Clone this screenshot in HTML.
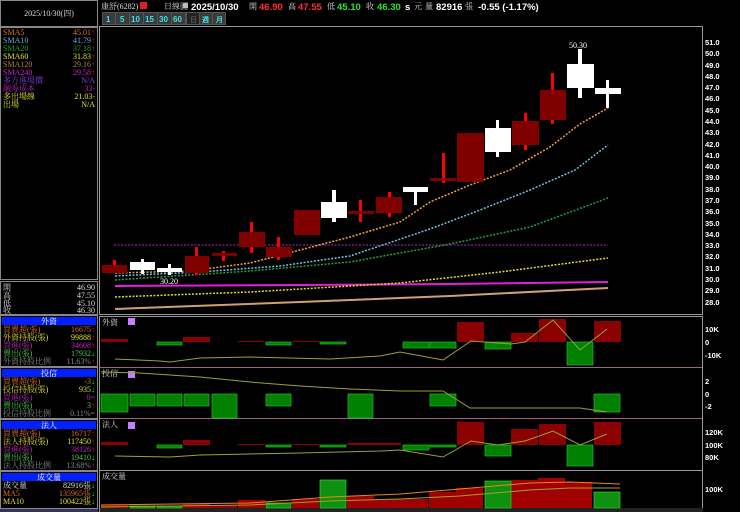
<!DOCTYPE html>
<html><head><meta charset="utf-8"><style>
html,body{margin:0;padding:0;background:#000;width:740px;height:512px;overflow:hidden}
svg{display:block;font-family:"Liberation Sans","Noto Sans CJK TC",sans-serif}
.s{font-family:"Liberation Serif","Noto Serif CJK SC",serif;font-size:8px}
.a{font-family:"Liberation Sans",sans-serif;font-size:8px;fill:#fff;font-weight:bold}
.t{font-family:"Liberation Sans",sans-serif;font-size:9.5px;font-weight:bold}
</style></head><body>
<svg width="740" height="512" viewBox="0 0 740 512">
<rect x="0.5" y="0.5" width="97" height="26" fill="none" stroke="#888"/>
<text x="49" y="16" class="s" fill="#ddd" text-anchor="middle">2025/10/30(四)</text>
<rect x="0.5" y="27.5" width="97" height="252" fill="none" stroke="#888"/>
<g class="s">
<text x="3" y="35" fill="#e07020">SMA5</text><text x="95" y="35" fill="#e07020" text-anchor="end">45.01<tspan fill="#f00">↑</tspan></text>
<text x="3" y="43" fill="#60b0e0">SMA10</text><text x="95" y="43" fill="#60b0e0" text-anchor="end">41.79<tspan fill="#f00">↑</tspan></text>
<text x="3" y="51" fill="#20a020">SMA20</text><text x="95" y="51" fill="#20a020" text-anchor="end">37.18<tspan fill="#f00">↑</tspan></text>
<text x="3" y="59" fill="#e0e020">SMA60</text><text x="95" y="59" fill="#e0e020" text-anchor="end">31.83<tspan fill="#f00">↑</tspan></text>
<text x="3" y="67" fill="#b08040">SMA120</text><text x="95" y="67" fill="#b08040" text-anchor="end">29.16<tspan fill="#f00">↑</tspan></text>
<text x="3" y="75" fill="#d020d0">SMA240</text><text x="95" y="75" fill="#d020d0" text-anchor="end">29.58<tspan fill="#f00">↑</tspan></text>
<text x="3" y="83" fill="#8040e0">多方進場價</text><text x="95" y="83" fill="#8040e0" text-anchor="end">N/A</text>
<text x="3" y="91" fill="#c020c0">融券成本</text><text x="95" y="91" fill="#c020c0" text-anchor="end">33-</text>
<text x="3" y="99" fill="#e0e020">多出場線</text><text x="95" y="99" fill="#e0e020" text-anchor="end">21.03-</text>
<text x="3" y="107" fill="#e0e020">出場</text><text x="95" y="107" fill="#e0e020" text-anchor="end">N/A</text>
</g>
<rect x="0.5" y="281.5" width="97" height="33" fill="none" stroke="#888"/>
<g class="s" fill="#ddd">
<text x="3" y="290">開</text><text x="95" y="290" text-anchor="end">46.90</text>
<text x="3" y="298">高</text><text x="95" y="298" text-anchor="end">47.55</text>
<text x="3" y="306">低</text><text x="95" y="306" text-anchor="end">45.10</text>
<text x="3" y="313">收</text><text x="95" y="313" text-anchor="end">46.30</text>
</g>
<rect x="0.5" y="315.5" width="97" height="51" fill="none" stroke="#888"/>
<rect x="2" y="317" width="94" height="8" fill="#0020ff"/>
<text x="49" y="324" class="s" fill="#fff" text-anchor="middle">外資</text>
<g class="s">
<text x="3" y="332" fill="#e07020">買賣超(張)</text><text x="95" y="332" text-anchor="end" fill="#e07020">16675<tspan fill="#f00">↑</tspan></text>
<text x="3" y="340" fill="#e0e020">外資持股(張)</text><text x="95" y="340" text-anchor="end" fill="#e0e020">99888<tspan fill="#f00">↑</tspan></text>
<text x="3" y="348" fill="#c020c0">買進(張)</text><text x="95" y="348" text-anchor="end" fill="#c020c0">34608<tspan fill="#f00">↑</tspan></text>
<text x="3" y="356" fill="#40d040">賣出(張)</text><text x="95" y="356" text-anchor="end" fill="#40d040">17932<tspan fill="#0f0">↓</tspan></text>
<text x="3" y="364" fill="#888">外資持股比例</text><text x="95" y="364" text-anchor="end" fill="#888">11.63%<tspan fill="#f00">↑</tspan></text>
</g>
<rect x="0.5" y="367.5" width="97" height="51" fill="none" stroke="#888"/>
<rect x="2" y="369" width="94" height="8" fill="#0020ff"/>
<text x="49" y="376" class="s" fill="#fff" text-anchor="middle">投信</text>
<g class="s">
<text x="3" y="384" fill="#e07020">買賣超(張)</text><text x="95" y="384" text-anchor="end" fill="#e07020">-3<tspan fill="#0f0">↓</tspan></text>
<text x="3" y="392" fill="#e0e020">投信持股(張)</text><text x="95" y="392" text-anchor="end" fill="#e0e020">935<tspan fill="#0f0">↓</tspan></text>
<text x="3" y="400" fill="#c020c0">買進(張)</text><text x="95" y="400" text-anchor="end" fill="#c020c0">0=</text>
<text x="3" y="408" fill="#40d040">賣出(張)</text><text x="95" y="408" text-anchor="end" fill="#40d040">3<tspan fill="#f00">↑</tspan></text>
<text x="3" y="416" fill="#888">投信持股比例</text><text x="95" y="416" text-anchor="end" fill="#888">0.11%=</text>
</g>
<rect x="0.5" y="419.5" width="97" height="51" fill="none" stroke="#888"/>
<rect x="2" y="421" width="94" height="8" fill="#0020ff"/>
<text x="49" y="428" class="s" fill="#fff" text-anchor="middle">法人</text>
<g class="s">
<text x="3" y="436" fill="#e07020">買賣超(張)</text><text x="95" y="436" text-anchor="end" fill="#e07020">16717<tspan fill="#f00">↑</tspan></text>
<text x="3" y="444" fill="#e0e020">法人持股(張)</text><text x="95" y="444" text-anchor="end" fill="#e0e020">117450<tspan fill="#f00">↑</tspan></text>
<text x="3" y="452" fill="#c020c0">買進(張)</text><text x="95" y="452" text-anchor="end" fill="#c020c0">38126<tspan fill="#f00">↑</tspan></text>
<text x="3" y="460" fill="#40d040">賣出(張)</text><text x="95" y="460" text-anchor="end" fill="#40d040">19410<tspan fill="#0f0">↓</tspan></text>
<text x="3" y="468" fill="#888">法人持股比例</text><text x="95" y="468" text-anchor="end" fill="#888">13.68%<tspan fill="#f00">↑</tspan></text>
</g>
<rect x="0.5" y="471.5" width="97" height="37" fill="none" stroke="#888"/>
<rect x="2" y="473" width="94" height="8" fill="#0020ff"/>
<text x="49" y="480" class="s" fill="#fff" text-anchor="middle">成交量</text>
<g class="s">
<text x="3" y="488" fill="#ddd">成交量</text><text x="95" y="488" text-anchor="end" fill="#ddd">82916張<tspan fill="#0f0">↓</tspan></text>
<text x="3" y="496" fill="#e07020">MA5</text><text x="95" y="496" text-anchor="end" fill="#e07020">135965張<tspan fill="#0f0">↓</tspan></text>
<text x="3" y="504" fill="#e0e020">MA10</text><text x="95" y="504" text-anchor="end" fill="#e0e020">100422張<tspan fill="#0f0">↓</tspan></text>
</g>
<rect x="0" y="509" width="98" height="3" fill="#335"/>

<text x="101" y="9" class="s" fill="#ddd">康舒(6282)</text>
<rect x="140" y="2" width="7" height="7" fill="#e02020"/>
<text x="164" y="9" class="s" fill="#ddd">日線圖</text>
<rect x="183" y="3" width="5" height="5" fill="#bbb"/>
<text x="191" y="10" class="t" fill="#fff" font-size="10.5">2025/10/30</text>
<text x="249" y="9" class="s" fill="#ddd">開</text><text x="259" y="10" class="t" fill="#ff3030">46.90</text>
<text x="288" y="9" class="s" fill="#ddd">高</text><text x="298" y="10" class="t" fill="#ff3030">47.55</text>
<text x="327" y="9" class="s" fill="#ddd">低</text><text x="337" y="10" class="t" fill="#30e030">45.10</text>
<text x="366" y="9" class="s" fill="#ddd">收</text><text x="377" y="10" class="t" fill="#30e030">46.30</text>
<text x="405" y="10" class="t" fill="#fff">s</text><text x="414" y="9" class="s" fill="#ddd">元</text>
<text x="425" y="9" class="s" fill="#ddd">量</text><text x="436" y="10" class="t" fill="#fff">82916</text><text x="465" y="9" class="s" fill="#ddd">張</text>
<text x="478" y="10" class="t" fill="#fff">-0.55 (-1.17%)</text>
<rect x="102" y="12" width="124" height="13" fill="#555"/>
<g font-size="8" font-weight="bold" fill="#40e0e0" font-family="Liberation Sans,sans-serif">
<rect x="103" y="13" width="12" height="11" fill="#3a3a3a"/><text x="106" y="22">1</text>
<rect x="116" y="13" width="13" height="11" fill="#3a3a3a"/><text x="120" y="22">5</text>
<rect x="130" y="13" width="13" height="11" fill="#3a3a3a"/><text x="131" y="22">10</text>
<rect x="144" y="13" width="13" height="11" fill="#3a3a3a"/><text x="145" y="22">15</text>
<rect x="158" y="13" width="13" height="11" fill="#3a3a3a"/><text x="159" y="22">30</text>
<rect x="172" y="13" width="13" height="11" fill="#3a3a3a"/><text x="173" y="22">60</text>
<rect x="187" y="13" width="12" height="11" fill="#222"/><text x="190" y="22" fill="#555" font-size="7">日</text>
<rect x="200" y="13" width="12" height="11" fill="#3a3a3a"/><text x="202" y="22" font-size="7">週</text>
<rect x="213" y="13" width="12" height="11" fill="#3a3a3a"/><text x="216" y="22" font-size="7">月</text>
</g>

<rect x="99.5" y="26.5" width="603" height="288" fill="none" stroke="#999"/>
<line x1="100" y1="316.5" x2="703" y2="316.5" stroke="#999"/>
<line x1="100" y1="367.5" x2="703" y2="367.5" stroke="#a06080"/>
<line x1="100" y1="418.5" x2="703" y2="418.5" stroke="#a06080"/>
<line x1="100" y1="470.5" x2="703" y2="470.5" stroke="#999"/>
<line x1="99.5" y1="316" x2="99.5" y2="512" stroke="#999"/>
<line x1="702.5" y1="316" x2="702.5" y2="512" stroke="#999"/>
<rect x="100" y="508" width="603" height="4" fill="#222"/>

<g class="a" style="font-size:7.5px">
<text x="705" y="45">51.0</text><text x="705" y="56">50.0</text><text x="705" y="68">49.0</text><text x="705" y="79">48.0</text>
<text x="705" y="90">47.0</text><text x="705" y="101">46.0</text><text x="705" y="113">45.0</text><text x="705" y="124">44.0</text>
<text x="705" y="135">43.0</text><text x="705" y="147">42.0</text><text x="705" y="158">41.0</text><text x="705" y="169">40.0</text>
<text x="705" y="180">39.0</text><text x="705" y="192">38.0</text><text x="705" y="203">37.0</text><text x="705" y="214">36.0</text>
<text x="705" y="226">35.0</text><text x="705" y="237">34.0</text><text x="705" y="248">33.0</text><text x="705" y="259">32.0</text>
<text x="705" y="271">31.0</text><text x="705" y="282">30.0</text><text x="705" y="293">29.0</text><text x="705" y="305">28.0</text>
<text x="705" y="332">10K</text><text x="705" y="345">0</text><text x="705" y="358">-10K</text>
<text x="705" y="384">2</text><text x="705" y="397">0</text><text x="705" y="409">-2</text>
<text x="705" y="435">120K</text><text x="705" y="448">100K</text><text x="705" y="460">80K</text>
<text x="705" y="492">100K</text>
</g>

<line x1="114" y1="245" x2="608" y2="245" stroke="#9020a0" stroke-dasharray="2,1.5" stroke-width="1.3"/>
<polyline points="115,309 300,302 450,296 608,288" fill="none" stroke="#d0a070" stroke-width="2"/>
<polyline points="115,286 300,285 450,284 608,282" fill="none" stroke="#e020e0" stroke-width="2"/>
<polyline points="115,297 250,292 400,283 500,272 608,258" fill="none" stroke="#e0e020" stroke-dasharray="2,1.5" stroke-width="1.5"/>
<polyline points="115,280 250,271 350,262 450,244 530,227 608,198" fill="none" stroke="#20a040" stroke-dasharray="2,1.5" stroke-width="1.5"/>
<polyline points="115,276 200,272 280,266 350,256 430,229 480,210 530,190 575,170 608,145" fill="none" stroke="#70c0e0" stroke-dasharray="2,1.5" stroke-width="1.5"/>
<polyline points="115,273 190,271 250,263 300,250 350,237 400,222 430,202 470,185 510,170 550,147 580,124 608,108" fill="none" stroke="#f0a040" stroke-dasharray="2,1.5" stroke-width="1.5"/>

<g fill="#800000" stroke="none">
<rect x="113" y="260" width="3" height="5" fill="#f00"/><rect x="102" y="265" width="25" height="8"/>
<rect x="195" y="247" width="3" height="28" fill="#f00"/><rect x="185" y="256" width="24" height="17"/>
<rect x="222" y="251" width="3" height="10" fill="#f00"/><rect x="212" y="253" width="25" height="3"/>
<rect x="250" y="222" width="3" height="31" fill="#f00"/><rect x="239" y="232" width="26" height="15"/>
<rect x="277" y="237" width="3" height="23" fill="#f00"/><rect x="266" y="247" width="26" height="10"/>
<rect x="294" y="210" width="26" height="25"/>
<rect x="359" y="200" width="3" height="22" fill="#f00"/><rect x="348" y="211" width="26" height="3"/>
<rect x="388" y="192" width="3" height="25" fill="#f00"/><rect x="376" y="197" width="26" height="16"/>
<rect x="442" y="153" width="3" height="30" fill="#f00"/><rect x="430" y="178" width="26" height="3"/>
<rect x="457" y="133" width="27" height="49"/>
<rect x="524" y="113" width="3" height="37" fill="#f00"/><rect x="512" y="121" width="27" height="24"/>
<rect x="551" y="73" width="3" height="51" fill="#f00"/><rect x="540" y="90" width="26" height="30"/>
</g>
<g fill="#fff">
<rect x="141" y="259" width="3" height="15"/><rect x="130" y="262" width="25" height="8"/>
<rect x="168" y="264" width="3" height="11"/><rect x="157" y="268" width="25" height="4"/>
<rect x="332" y="190" width="4" height="32"/><rect x="321" y="202" width="26" height="16"/>
<rect x="414" y="187" width="3" height="18"/><rect x="403" y="187" width="25" height="5"/>
<rect x="496" y="120" width="3" height="37"/><rect x="485" y="128" width="26" height="24"/>
<rect x="578" y="49" width="4" height="49"/><rect x="567" y="64" width="27" height="24"/>
<rect x="606" y="80" width="3" height="28"/><rect x="595" y="88" width="26" height="6"/>
</g>
<text x="569" y="48" class="s" fill="#fff">50.30</text>
<text x="160" y="284" class="s" fill="#fff">30.20</text>

<g class="s" fill="#ddd"><text x="102" y="325">外資</text><text x="102" y="376">投信</text><text x="102" y="427">法人</text><text x="102" y="479">成交量</text></g>
<g fill="#c080ff"><rect x="128" y="318" width="7" height="7"/><rect x="128" y="371" width="7" height="7"/><rect x="128" y="422" width="7" height="7"/></g>

<g fill="#8b0000"><rect x="101" y="339" width="27" height="3"/><rect x="183" y="337" width="27" height="5"/><rect x="238" y="341" width="27" height="1"/><rect x="292" y="341" width="27" height="1"/>
<rect x="457" y="322" width="27" height="20"/><rect x="511" y="333" width="27" height="9"/><rect x="539" y="319" width="27" height="23"/><rect x="594" y="321" width="27" height="21"/></g>
<g fill="#008000" stroke="#20c020" stroke-width="0.7"><rect x="157" y="342" width="25" height="3"/><rect x="266" y="342" width="25" height="3"/><rect x="320" y="342" width="26" height="2"/>
<rect x="403" y="342" width="26" height="6"/><rect x="430" y="342" width="26" height="6"/><rect x="485" y="342" width="26" height="7"/><rect x="567" y="342" width="26" height="23"/></g>
<polyline points="115,359 160,361 170,362 200,358 250,357 330,359 380,356 400,352 443,360 471,341 511,344 525,342 553,320 580,350 607,329" fill="none" stroke="#a0a030" stroke-width="1"/>

<g fill="#008000" stroke="#20c020" stroke-width="0.7"><rect x="101" y="394" width="27" height="18"/><rect x="130" y="394" width="25" height="12"/><rect x="157" y="394" width="25" height="12"/><rect x="184" y="394" width="25" height="12"/>
<rect x="212" y="394" width="25" height="24"/><rect x="266" y="394" width="25" height="12"/><rect x="348" y="394" width="25" height="24"/><rect x="430" y="394" width="26" height="12"/><rect x="594" y="394" width="26" height="18"/></g>
<polyline points="101,372 140,373 200,377 250,382 300,386 350,389 400,391 443,391 470,408 580,408 607,412" fill="none" stroke="#a0a030" stroke-width="1"/>

<g fill="#8b0000"><rect x="101" y="442" width="27" height="3"/><rect x="183" y="440" width="27" height="5"/><rect x="238" y="444" width="27" height="1"/><rect x="292" y="444" width="27" height="1"/><rect x="347" y="443" width="27" height="2"/><rect x="374" y="443" width="27" height="2"/>
<rect x="457" y="422" width="27" height="23"/><rect x="511" y="429" width="27" height="16"/><rect x="539" y="424" width="27" height="21"/><rect x="594" y="422" width="27" height="23"/></g>
<g fill="#008000" stroke="#20c020" stroke-width="0.7"><rect x="157" y="445" width="25" height="3"/><rect x="266" y="445" width="25" height="2"/><rect x="320" y="445" width="26" height="2"/>
<rect x="403" y="445" width="26" height="5"/><rect x="430" y="445" width="26" height="2"/><rect x="485" y="445" width="26" height="11"/><rect x="567" y="445" width="26" height="21"/></g>
<polyline points="115,456 170,457 200,455 250,454 300,453 380,451 400,450 443,457 471,441 498,445 525,441 553,431 580,445 607,434" fill="none" stroke="#a0a030" stroke-width="1"/>

<g fill="#a00000"><rect x="101" y="505" width="27" height="3"/><rect x="183" y="504" width="27" height="4"/><rect x="210" y="505" width="27" height="3"/><rect x="238" y="500" width="27" height="8"/>
<rect x="292" y="499" width="27" height="9"/><rect x="347" y="496" width="27" height="12"/><rect x="374" y="499" width="27" height="9"/><rect x="401" y="499" width="27" height="9"/>
<rect x="429" y="492" width="27" height="16"/><rect x="456" y="488" width="27" height="20"/><rect x="511" y="480" width="27" height="28"/><rect x="538" y="478" width="27" height="30"/><rect x="565" y="482" width="27" height="26"/></g>
<g fill="#109010" stroke="#30d030" stroke-width="0.7"><rect x="130" y="506" width="25" height="2"/><rect x="157" y="506" width="25" height="2"/><rect x="266" y="503" width="25" height="5"/>
<rect x="320" y="480" width="26" height="28"/><rect x="485" y="481" width="26" height="27"/><rect x="594" y="492" width="26" height="16"/></g>
<polyline points="101,505 250,503 330,497 400,494 460,489 530,483 570,482 620,484" fill="none" stroke="#f08020" stroke-width="1"/>
<polyline points="101,507 250,505 330,501 400,499 460,496 530,490 570,488 620,488" fill="none" stroke="#a0a030" stroke-width="1"/>
</svg>
</body></html>
